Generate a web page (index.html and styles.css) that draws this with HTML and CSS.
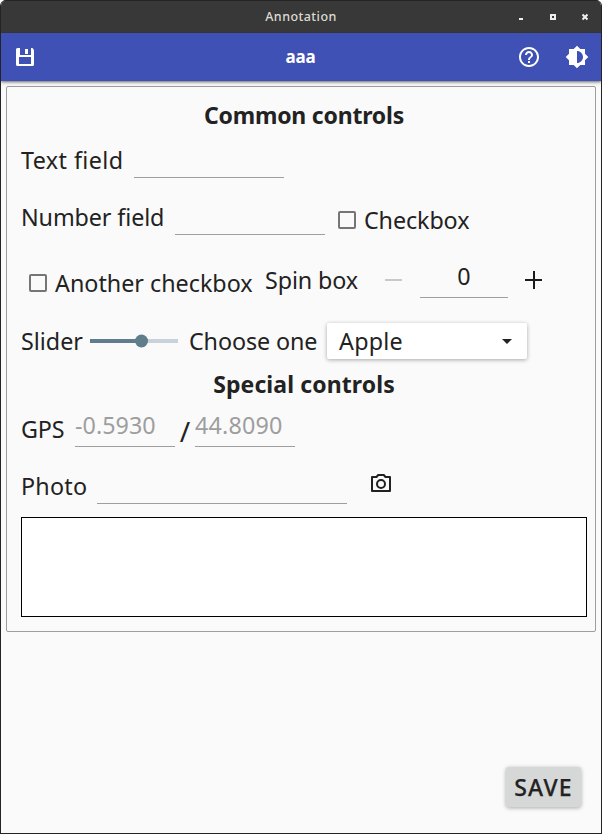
FILE: index.html
```html
<!DOCTYPE html>
<html lang="en">
<head>
<meta charset="utf-8">
<title>Annotation</title>
<link rel="stylesheet" href="styles.css">
</head>
<body>
<div class="window">
  <header class="titlebar">
    <span class="window-title">Annotation</span>
    <div class="window-buttons">
      <svg width="5" height="10" viewBox="0 0 5 10"><path fill="#eee" d="M0 6h4v2H0z"/></svg>
      <svg width="6" height="10" viewBox="0 0 6 10"><path fill="none" stroke="#eee" stroke-width="2" d="M1 3h4v4H1z"/></svg>
      <svg width="6" height="10" viewBox="0 0 6 10"><path fill="none" stroke="#eee" stroke-width="2" d="M.5 2.500l5 5m0-5l-5 5"/></svg>
    </div>
  </header>
  <div class="toolbar">
    <svg class="icon-save" width="18" height="18" viewBox="0 0 18 18"><path fill="#fff" fill-rule="evenodd" d="M1.500 0H4v7h11V0h1.500L18 2v14.500q0 1.500-1.500 1.500h-15Q0 18 0 16.500v-15Q0 0 1.500 0zM3 9v7h12V9zM9 1h3v5H9z"/></svg>
    <span class="toolbar-title">aaa</span>
    <div class="toolbar-actions">
      <svg width="24" height="24" viewBox="0 0 24 24"><path fill="#fff" d="M11 18h2v-2h-2v2zm1-16C6.480 2 2 6.480 2 12s4.480 10 10 10 10-4.480 10-10S17.520 2 12 2zm0 18c-4.410 0-8-3.590-8-8s3.590-8 8-8 8 3.590 8 8-3.590 8-8 8zm0-14c-2.210 0-4 1.790-4 4h2c0-1.100.9-2 2-2s2 .9 2 2c0 2-3 1.750-3 5h2c0-2.250 3-2.500 3-5 0-2.210-1.790-4-4-4z"/></svg>
      <svg width="24" height="24" viewBox="0 0 24 24"><path fill="#fff" d="M20 15.310L23.310 12 20 8.690V4h-4.690L12 .69 8.690 4H4v4.690L.69 12 4 15.310V20h4.690L12 23.310 15.310 20H20v-4.690zM12 18V6c3.310 0 6 2.690 6 6s-2.690 6-6 6z"/></svg>
    </div>
  </div>
  <main class="content">
    <section class="panel">
      <h2 class="heading heading-common"><span>Common controls</span></h2>
      <div class="row row-text">
        <span class="label w-text">Text field</span>
        <div class="field field-medium"></div>
      </div>
      <div class="row row-number">
        <span class="label w-number">Number field</span>
        <div class="field field-medium"></div>
        <div class="check"><i class="box"></i><span class="label w-check">Checkbox</span></div>
      </div>
      <div class="row row-spin">
        <div class="check check-second"><i class="box"></i><span class="label w-another">Another checkbox</span></div>
        <span class="label w-spin">Spin box</span>
        <svg class="minus" width="17" height="18" viewBox="0 0 17 18"><path fill="#c8c8c8" d="M0 8h17v2H0z"/></svg>
        <div class="field field-spin">0</div>
        <svg class="plus" width="17" height="18" viewBox="0 0 17 18"><path fill="#1c1c1c" d="M0 8h8V0h2v8h7v2h-7v8H8v-8H0z"/></svg>
      </div>
      <div class="row row-slider">
        <span class="label w-slider">Slider</span>
        <svg class="slider" width="88" height="14" viewBox="0 0 88 14"><path fill="#c9d2d8" d="M51 5h37v4H51z"/><path fill="#607d8b" d="M0 5h51v4H0z"/><circle cx="51.500" cy="7" r="6.500" fill="#607d8b"/></svg>
        <span class="label w-choose">Choose one</span>
        <div class="combo"><span class="label w-apple">Apple</span><svg width="10" height="5" viewBox="0 0 10 5"><path fill="#222" d="M0 0h10L5 5z"/></svg></div>
      </div>
      <h2 class="heading heading-special"><span>Special controls</span></h2>
      <div class="row row-gps">
        <span class="label w-gps">GPS</span>
        <div class="field field-coord lat">-0.5930</div>
        <span class="slash">/</span>
        <div class="field field-coord lon">44.8090</div>
      </div>
      <div class="row row-photo">
        <span class="label w-photo">Photo</span>
        <div class="field field-photo"></div>
        <svg class="camera" width="20" height="18" viewBox="0 0 20 18"><path fill="none" stroke="#212121" stroke-width="2" stroke-linejoin="round" d="M1 3h4.500l1.700-2h5.600l1.700 2H19v14H1z"/><circle cx="10" cy="10" r="4" fill="none" stroke="#212121" stroke-width="2"/></svg>
      </div>
      <div class="preview"></div>
    </section>
    <button class="save">SAVE</button>
  </main>
</div>
</body>
</html>
```
FILE: styles.css
```css
* { box-sizing: border-box; }
body { margin: 0; background: #fff; font-family: "Noto Sans", sans-serif; color: #222; }
svg { display: block; flex: none; }
.window {
  width: 602px; height: 834px; display: flex; flex-direction: column;
  background: #fafafa; border: solid #242426; border-width: 0 1px 1px;
  border-radius: 6px 6px 0 0; overflow: hidden;
}
.titlebar {
  height: 33px; flex: none; display: grid; grid-template-columns: 1fr auto 1fr; align-items: center;
  background: #383838; border-top: 1px solid #242424;
}
.window-title { grid-column: 2; font-size: 12.500px; line-height: 18px; font-weight: 500; color: #dfdbd2; letter-spacing: .45px; }
.window-buttons { display: flex; justify-content: flex-end; gap: 26px; padding-right: 13px; }
.toolbar {
  height: 48px; flex: none; display: grid; grid-template-columns: 1fr auto 1fr; align-items: center;
  background: #3f51b5; padding: 0 12px 0 12px; position: relative;
  box-shadow: 0 1px 2px rgba(0,0,0,.4), 0 2px 4px rgba(0,0,0,.2);
}
.icon-save { margin-left: 3px; }
.toolbar-title { color: #fff; font-size: 17px; line-height: 24px; padding: 0 1px 1px 0; font-weight: 700; letter-spacing: -.2px; }
.toolbar-actions { display: flex; justify-content: flex-end; gap: 24px; }
.content { flex: 1; display: flex; flex-direction: column; padding: 5px; }
.panel { width: 590px; height: 546px; border: 1px solid #9e9e9e; border-radius: 2px; padding: 14px 8px 14px 14px; }
.heading { margin: 0; font-size: 23px; line-height: 28px; font-weight: 700; display: flex; justify-content: center; white-space: nowrap; }
.heading-common { height: 45px; letter-spacing: -.2px; }
.heading-special { height: 37px; letter-spacing: .1px; }
.row { display: flex; align-items: flex-start; }
.row-text { height: 57px; }
.row-number { height: 60px; }
.row-spin { height: 54px; }
.row-slider { height: 53px; }
.row-gps { height: 57px; }
.row-photo { height: 53px; }
.label { flex: none; font-size: 23.300px; line-height: 28px; white-space: nowrap; letter-spacing: -.1px; }
.field { flex: none; border-bottom: 1px solid #9e9e9e; font-size: 23.300px; line-height: 28px; height: 32px; }
.field-medium { width: 150px; }
.check { display: flex; margin: 3px 0 0 13px; }
.box { width: 18px; height: 18px; margin: 5px 8px 0 0; border: 2px solid #757575; border-radius: 2px; }
.w-text { width: 113px; letter-spacing: .42px; }
.w-number { width: 154px; letter-spacing: -.1px; }
.check-second { margin: 6px 0 0 8px; }
.w-another { width: 210px; letter-spacing: 0; }
.w-spin { width: 120px; margin-top: 3px; }
.minus { margin-top: 8px; }
.field-spin { width: 88px; height: 35px; line-height: 26px; margin: 0 17px 0 18px; text-align: center; }
.plus { margin-top: 8px; }
.row-slider .label { margin-top: 10px; }
.w-slider { width: 69px; letter-spacing: 0; }
.slider { margin: 17px 11px 0 0; }
.w-choose { width: 138px; }
.combo {
  width: 200px; height: 36px; margin-top: 6px; padding: 0 15px 0 12px; background: #fff; border-radius: 2px;
  display: flex; align-items: center; justify-content: space-between; box-shadow: 0 1px 4px rgba(0,0,0,.33);
}
.row-slider .w-apple { margin-top: 0; letter-spacing: .25px; }
.w-gps { width: 54px; margin-top: 8px; }
.field-coord { width: 100px; height: 36px; margin-top: 4px; color: #9e9e9e; }
.lat { letter-spacing: .05px; }
.lon { letter-spacing: .2px; }
.slash { width: 20px; margin-top: 10px; text-align: center; font-size: 28px; line-height: 28px; }
.w-photo { width: 76px; margin-top: 8px; letter-spacing: .25px; }
.field-photo { width: 250px; height: 40px; }
.camera { margin: 10px 0 0 24px; }
.preview { width: 566px; height: 100px; border: 1px solid #000; background: #fff; }
.save {
  align-self: flex-end; width: 75px; height: 40px; margin: auto 15px 21px 0; padding: 0; border: 0; border-radius: 3px;
  background: #d6d7d7; color: #222; font: 500 23px/40px "Noto Sans", sans-serif; letter-spacing: 1.200px; text-align: center;
  -webkit-text-stroke: .25px #222;
  box-shadow: 0 1px 4px rgba(0,0,0,.33);
}
```
